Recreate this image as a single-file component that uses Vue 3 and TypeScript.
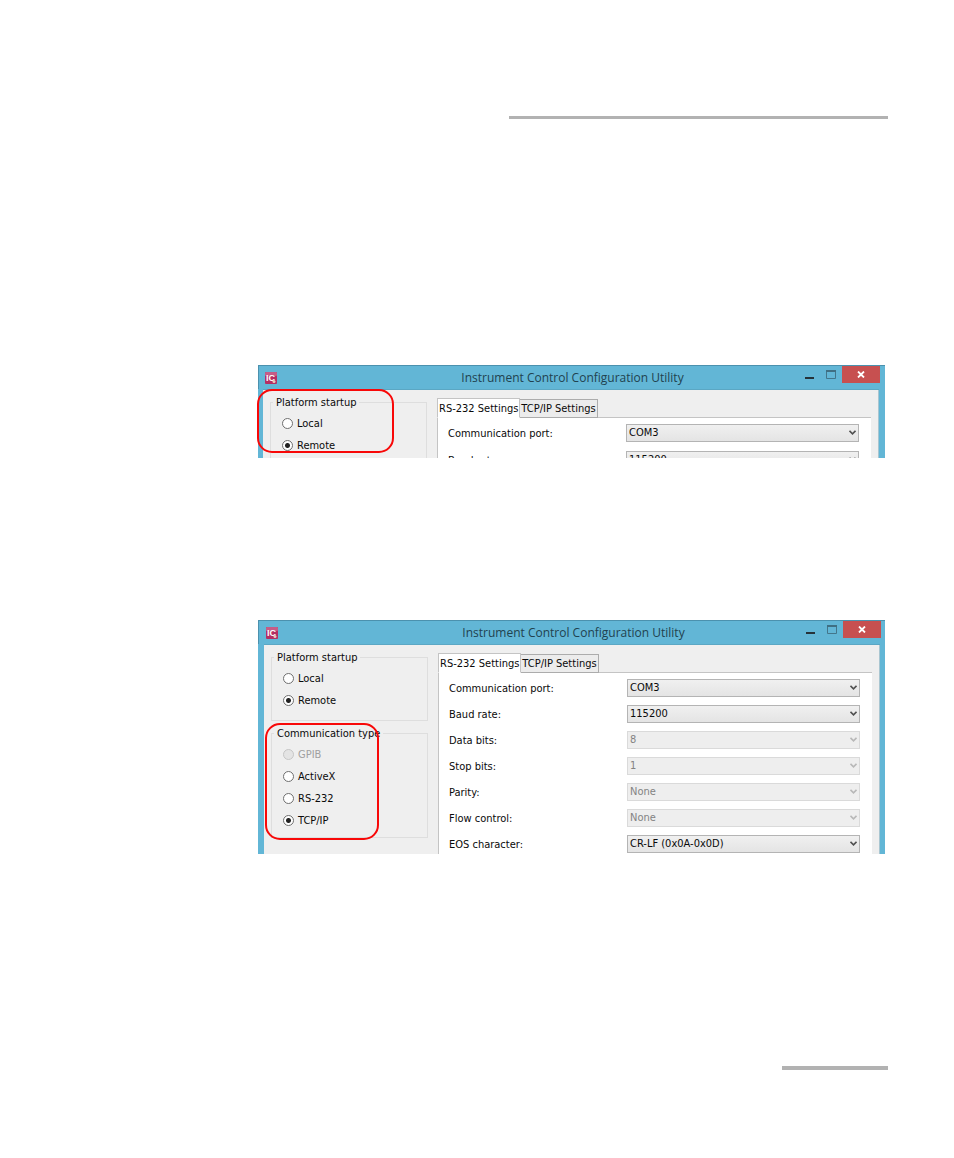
<script setup lang="ts">
import { reactive } from 'vue'

interface Field {
  key: string
  label: string
  value: string
  disabled?: boolean
}

interface Option {
  label: string
  disabled?: boolean
}

interface Shot {
  id: string
  compact: boolean
  startup: string
  type: string
  tab: string
  fields: Field[]
}

const allFields: Field[] = [
  { key: 'port', label: 'Communication port:', value: 'COM3' },
  { key: 'baud', label: 'Baud rate:', value: '115200' },
  { key: 'data', label: 'Data bits:', value: '8', disabled: true },
  { key: 'stop', label: 'Stop bits:', value: '1', disabled: true },
  { key: 'parity', label: 'Parity:', value: 'None', disabled: true },
  { key: 'flow', label: 'Flow control:', value: 'None', disabled: true },
  { key: 'eos', label: 'EOS character:', value: 'CR-LF (0x0A-0x0D)' },
]

const startupOptions: string[] = ['Local', 'Remote']
const typeOptions: Option[] = [
  { label: 'GPIB', disabled: true },
  { label: 'ActiveX' },
  { label: 'RS-232' },
  { label: 'TCP/IP' },
]
const tabs: string[] = ['RS-232 Settings', 'TCP/IP Settings']

const shots = reactive<Shot[]>([
  { id: 'startup', compact: true, startup: 'Remote', type: 'TCP/IP', tab: tabs[0], fields: allFields.slice(0, 2) },
  { id: 'type', compact: false, startup: 'Remote', type: 'TCP/IP', tab: tabs[0], fields: allFields },
])
</script>

<template>
  <main class="page">
    <div class="rule rule-top"></div>

    <figure v-for="s in shots" :key="s.id" class="shot" :class="s.compact ? 'shot-compact' : 'shot-full'">
      <div class="window">
        <header class="titlebar">
          <svg class="app-icon" viewBox="0 0 12 12" aria-hidden="true">
            <rect width="12" height="12" rx="1" fill="#b52e63" />
            <rect width="12" height="4" rx="1" fill="#c55c87" />
            <text x="1" y="9" class="icon-text">IC</text>
            <circle cx="9" cy="9.500" r="1.500" fill="#eac9bd" />
          </svg>
          <h2 class="title">Instrument Control Configuration Utility</h2>
          <div class="controls">
            <button type="button" class="ctl min" aria-label="Minimize">
              <svg width="9" height="2" viewBox="0 0 9 2"><rect width="9" height="2" fill="#26333a" /></svg>
            </button>
            <button type="button" class="ctl max" aria-label="Maximize">
              <svg width="10" height="9" viewBox="0 0 10 9">
                <path d="M.5 1v7.500h9V1" fill="none" stroke="#43768b" />
                <rect width="10" height="2" fill="#3f6f83" />
              </svg>
            </button>
            <button type="button" class="ctl close" aria-label="Close">
              <svg width="8" height="7" viewBox="0 0 8 7"><path d="M1 .5l6 6M7 .5l-6 6" stroke="#fff" stroke-width="1.800" /></svg>
            </button>
          </div>
        </header>

        <div class="body">
          <div class="side">
            <fieldset class="group">
              <legend>Platform startup</legend>
              <label v-for="o in startupOptions" :key="o" class="radio">
                <input v-model="s.startup" type="radio" :name="s.id + '-startup'" :value="o" />
                <span>{{ o }}</span>
              </label>
            </fieldset>
            <fieldset v-if="!s.compact" class="group group-type">
              <legend>Communication type</legend>
              <label v-for="o in typeOptions" :key="o.label" class="radio" :class="{ off: o.disabled }">
                <input v-model="s.type" type="radio" :name="s.id + '-type'" :value="o.label" :disabled="o.disabled" />
                <span>{{ o.label }}</span>
              </label>
            </fieldset>
          </div>

          <div class="settings">
            <div class="tabs" role="tablist">
              <button
                v-for="t in tabs"
                :key="t"
                type="button"
                role="tab"
                class="tab"
                :class="{ active: s.tab === t }"
                :aria-selected="s.tab === t"
                @click="s.tab = t"
              >{{ t }}</button>
            </div>
            <div class="panel" role="tabpanel">
              <div v-for="f in s.fields" :key="f.key" class="row">
                <label :for="s.id + '-' + f.key">{{ f.label }}</label>
                <div class="select">
                  <select :id="s.id + '-' + f.key" v-model="f.value" :disabled="f.disabled">
                    <option>{{ f.value }}</option>
                  </select>
                  <svg class="chevron" :class="{ off: f.disabled }" viewBox="0 0 7 5" aria-hidden="true">
                    <path d="M.5 .8l3 3 3-3" fill="none" stroke="currentColor" stroke-width="1.600" />
                  </svg>
                </div>
              </div>
            </div>
          </div>
        </div>
      </div>
      <div class="highlight"></div>
    </figure>

    <div class="rule rule-bottom"></div>
  </main>
</template>

<style>
body {
  margin: 0;
  background: #fff;
}
</style>

<style scoped>
.page {
  box-sizing: border-box;
  display: flex;
  flex-direction: column;
  min-height: 100vh;
  padding: 116px 66px 88px 258px;
  font: 11px/16px "DejaVu Sans Condensed", "Noto Sans", sans-serif;
  color: #0a0a0a;
}

.rule {
  background: #b2b2b2;
}

.rule-top {
  height: 3px;
  margin-left: 251px;
}

.rule-bottom {
  width: 106px;
  height: 4px;
  margin: auto 0 0 auto;
}

.shot {
  position: relative;
  margin: 162px 3px 0 0;
}

.shot-compact {
  margin-top: 246px;
}

.window {
  overflow: hidden;
  background: #efefef;
}

.shot-compact .window {
  max-height: 93px;
}

.titlebar {
  box-sizing: border-box;
  display: grid;
  grid-template-columns: 1fr auto 1fr;
  height: 24px;
  padding: 0 4px 0 7px;
  border-top: 1px solid #4b91ae;
  border-left: 1px solid #4b91ae;
  background: #62b6d6;
}

.shot-compact .titlebar {
  padding: 0 5px 0 6px;
}

.app-icon {
  width: 12px;
  height: 12px;
  margin-top: 6px;
}

.icon-text {
  font: bold 9px "Liberation Sans", sans-serif;
  fill: #fff;
}

.title {
  margin: 0;
  font: 12px/24px "Open Sans", "Noto Sans", sans-serif;
  color: #21424f;
}

.controls {
  display: flex;
  justify-content: flex-end;
}

.ctl {
  display: flex;
  justify-content: center;
  align-items: center;
  height: 17px;
  padding: 0;
  border: 0;
  background: transparent;
}

.min {
  width: 21px;
  padding-top: 6px;
}

.max {
  width: 22px;
}

.close {
  width: 38px;
  background: #c75050;
}

.body {
  display: flex;
  border: solid #62b6d6;
  border-width: 0 5px 0 6px;
  box-shadow: inset 0 1px #5ba7c4, inset -1px 0 #a9c6d1;
}

.shot-compact .body {
  border-width: 0 6px 0 5px;
}

.side {
  box-sizing: border-box;
  width: 174px;
  padding: 6px 10px 0 7px;
}

.group {
  min-width: 0;
  margin: 0;
  padding: 5px 11px 12px;
  border: 1px solid #dedede;
}

.group-type {
  margin-top: 5px;
  padding-bottom: 9px;
}

.group legend {
  height: 15px;
  margin-left: -9px;
  padding: 0 3px;
  line-height: 16px;
}

.radio {
  display: flex;
  align-items: center;
  gap: 4px;
  height: 16px;
}

.radio span {
  line-height: 18px;
}

.radio + .radio {
  margin-top: 6px;
}

.radio input {
  appearance: none;
  box-sizing: border-box;
  width: 11px;
  height: 11px;
  margin: 0;
  border: 1px solid #6f6f6f;
  border-radius: 50%;
  background: #fff;
}

.radio span {
  padding-top: 1px;
}

.radio input:checked {
  background: radial-gradient(circle, #222 0 2px, #fff 3px);
}

.radio.off {
  color: #a0a0a0;
}

.radio.off input {
  border-color: #c6c6c6;
  background: #e4e4e4;
}

.settings {
  display: flex;
  flex: 1;
  flex-direction: column;
  min-width: 0;
  padding: 9px 8px 0 0;
}

.tabs {
  display: flex;
  align-items: flex-end;
  margin-bottom: -1px;
}

.tab {
  position: relative;
  box-sizing: border-box;
  height: 19px;
  padding: 0 1px;
  border: 1px solid #acacac;
  border-left: 0;
  background: #ececec;
  font: inherit;
  line-height: 17px;
  color: inherit;
  white-space: nowrap;
}

.tab.active {
  height: 20px;
  border: 1px solid #c4c4c4;
  border-bottom-color: #fff;
  background: #fff;
}

.panel {
  flex: 1;
  padding: 6px 12px 1px 10px;
  border: solid #c4c4c4;
  border-width: 1px 0 0 1px;
  background: #fff;
}

.row {
  display: flex;
  align-items: flex-start;
}

.row + .row {
  margin-top: 8px;
}

.shot-compact .row + .row {
  margin-top: 9px;
}

.row label {
  width: 178px;
  height: 18px;
  line-height: 20px;
}

.select {
  position: relative;
  flex: 1;
  height: 18px;
}

.select select {
  appearance: none;
  display: block;
  box-sizing: border-box;
  width: 100%;
  height: 18px;
  padding: 0 20px 0 2px;
  border: 1px solid #b4b4b4;
  border-radius: 0;
  background: linear-gradient(#f0f0f0, #e4e4e4);
  font: inherit;
  line-height: 16px;
  color: #0a0a0a;
}

.select select:disabled {
  border-color: #dadada;
  background: #eee;
  color: #838383;
  opacity: 1;
}

.chevron {
  position: absolute;
  top: 6px;
  right: 3px;
  width: 7px;
  height: 5px;
  color: #505050;
  pointer-events: none;
}

.chevron.off {
  color: #b8b8b8;
}

.highlight {
  position: absolute;
  box-sizing: border-box;
  border: 2px solid #f80808;
  border-radius: 15px;
  pointer-events: none;
}

.shot-compact .highlight {
  top: 24px;
  left: -1px;
  width: 137px;
  height: 64px;
}

.shot-full .highlight {
  top: 103px;
  left: 7px;
  width: 114px;
  height: 117px;
}
</style>
